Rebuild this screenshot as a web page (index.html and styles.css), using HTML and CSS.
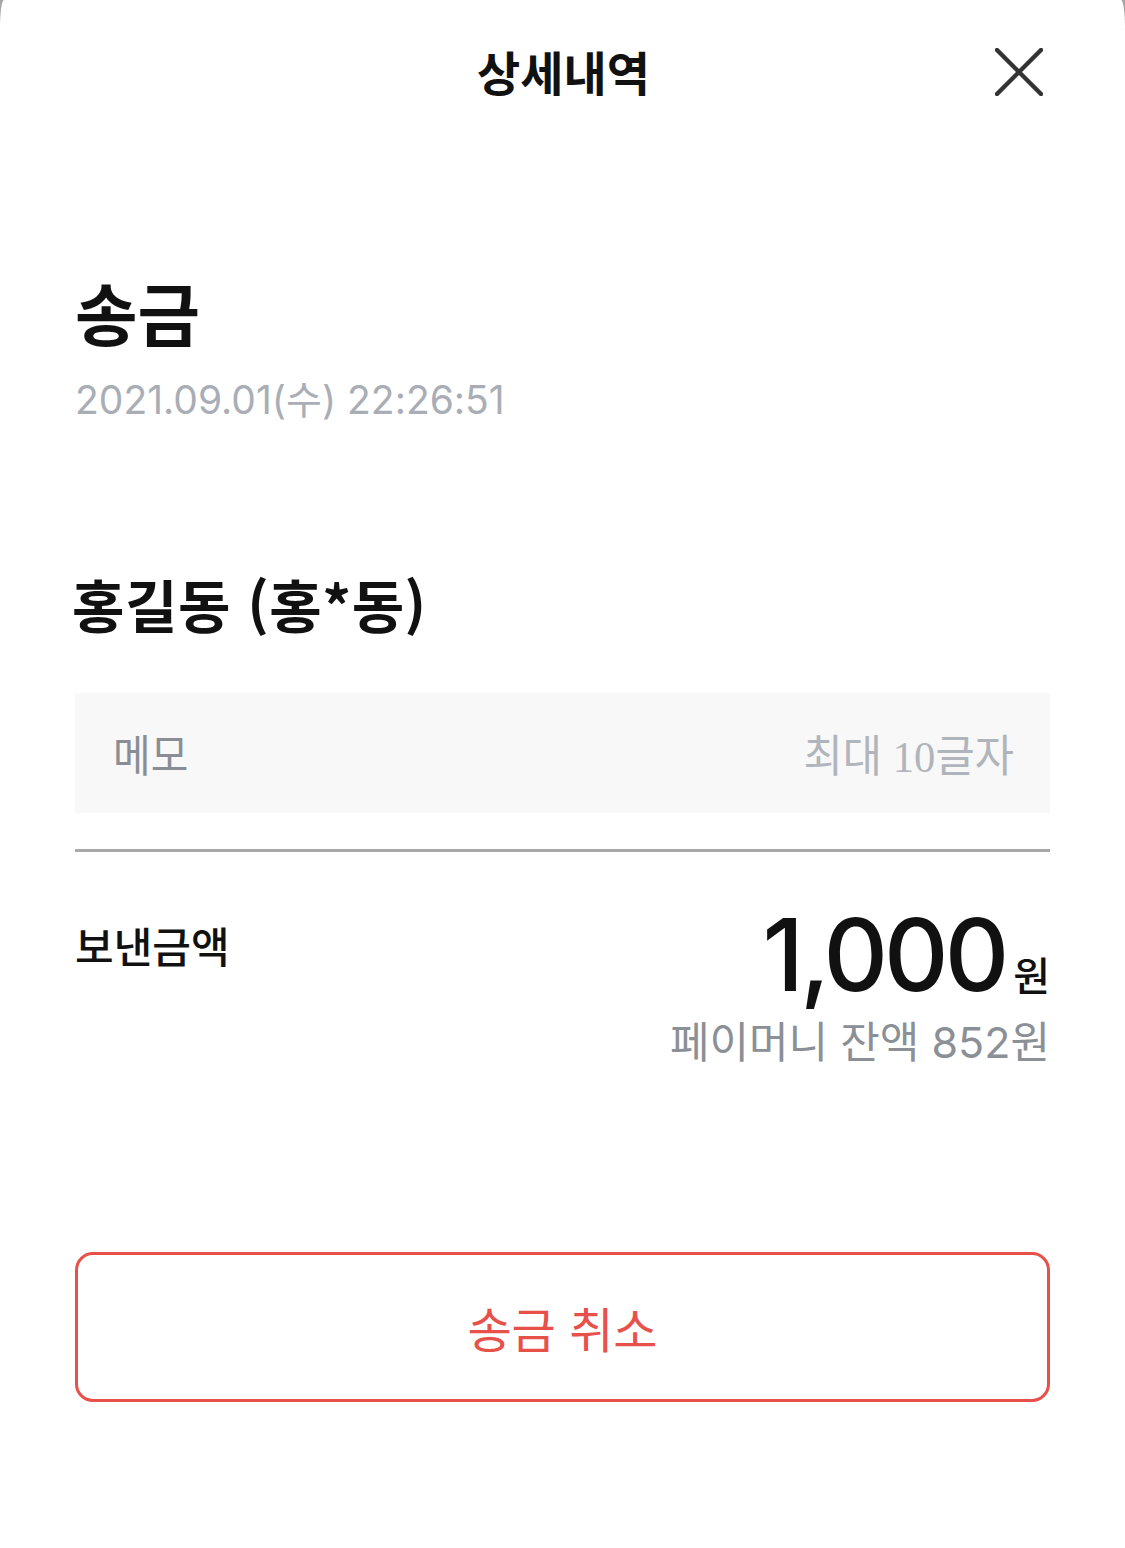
FILE: index.html
```html
<!DOCTYPE html>
<html lang="ko">
<head>
<meta charset="utf-8">
<title>상세내역</title>
<link rel="stylesheet" href="styles.css">
</head>
<body>
<div class="sheet">
  <header class="header">
    <span></span>
    <h1 class="header-title">상세내역</h1>
    <button class="close" aria-label="닫기">
      <svg width="48" height="48" viewBox="0 0 48 48"><path d="M2 2 L46 46 M46 2 L2 46" stroke="#333" stroke-width="4.4" stroke-linecap="round" fill="none"/></svg>
    </button>
  </header>

  <section class="summary">
    <h2 class="type">송금</h2>
    <p class="date">2021.09.01(수) 22:26:51</p>
  </section>

  <section class="recipient">
    <h3 class="name">홍길동 (홍*동)</h3>
    <div class="memo">
      <span class="memo-label">메모</span>
      <span class="memo-hint">최대 10글자</span>
    </div>
    <hr class="divider">
    <div class="amount-row">
      <span class="amount-label">보낸금액</span>
      <div class="amount-col">
        <div class="amount"><span class="amount-num">1,000</span><span class="amount-unit">원</span></div>
        <div class="balance">페이머니 잔액 852원</div>
      </div>
    </div>
  </section>

  <button class="cancel">송금 취소</button>
</div>
</body>
</html>
```

FILE: styles.css
```css
html, body {
  margin: 0;
  padding: 0;
}
body {
  background: #a6a6a6;
  font-family: "Noto Sans CJK KR", "Noto Sans", sans-serif;
  color: #111;
}
.sheet {
  background: #fff;
  min-height: 1548px;
  box-sizing: border-box;
  border-top-left-radius: 4px 28px;
  border-top-right-radius: 4px 28px;
  padding: 0 75px;
  display: flex;
  flex-direction: column;
}
.header {
  height: 140px;
  display: grid;
  grid-template-columns: 1fr auto 1fr;
  align-items: center;
}
.header-title {
  margin: 0;
  font-size: 47px;
  font-weight: 700;
  letter-spacing: 0;
  line-height: 1;
  padding-left: 2px;
}
.close {
  justify-self: end;
  margin-right: 7px;
  margin-top: 4px;
  width: 48px;
  height: 48px;
  padding: 0;
  border: 0;
  background: none;
  display: flex;
}
.summary {
  margin-top: 130px;
}
.type {
  margin: 0;
  font-size: 68px;
  font-weight: 700;
  line-height: 84px;
}
.date {
  margin: 21px 0 0;
  font-family: "Inter", "Noto Sans CJK KR", sans-serif;
  font-size: 39px;
  line-height: 50px;
  color: #a9aeb6;
}
.recipient {
  margin-top: 142px;
}
.name {
  margin: 0;
  font-size: 57px;
  font-weight: 700;
  line-height: 72px;
  letter-spacing: 0.5px;
  margin-left: -3px;
}
.memo {
  margin-top: 54px;
  height: 120px;
  background: #f8f8f8;
  display: flex;
  justify-content: space-between;
  align-items: center;
  padding: 0 36px 0 38px;
}
.memo-label {
  font-size: 44px;
  color: #8a8e94;
  display: inline-block;
  transform: scaleX(0.93);
  transform-origin: left center;
}
.memo-hint {
  font-family: "Liberation Serif", "Noto Sans CJK KR", serif;
  font-size: 44px;
  color: #b0b5bc;
  display: inline-block;
  transform: scaleX(0.97);
  transform-origin: right center;
}
.divider {
  margin: 36px 0 0;
  border: 0;
  height: 3px;
  background: #a8a8a8;
}
.amount-row {
  display: flex;
  justify-content: space-between;
  align-items: flex-start;
  margin-top: 62px;
}
.amount-label {
  font-size: 42px;
  font-weight: 500;
  line-height: 60px;
  margin-top: 1px;
}
.amount-col {
  display: flex;
  flex-direction: column;
  align-items: flex-end;
  margin-top: -14px;
}
.amount {
  display: flex;
  align-items: baseline;
  gap: 8px;
}
.amount-num {
  font-family: "Inter", "Noto Sans", sans-serif;
  font-size: 100px;
  font-weight: 500;
  letter-spacing: -4px;
  line-height: 110px;
}
.amount-unit {
  font-size: 40px;
  font-weight: 500;
}
.balance {
  font-family: "Inter", "Noto Sans CJK KR", sans-serif;
  font-size: 43px;
  color: #8b8f96;
  line-height: 56px;
  margin-top: 4px;
}
.cancel {
  margin-top: 182px;
  height: 150px;
  border: 3px solid #e8504a;
  border-radius: 18px;
  background: #fff;
  color: #e8504a;
  font-family: "Noto Sans CJK KR", sans-serif;
  font-size: 48px;
  font-weight: 400;
}
```
